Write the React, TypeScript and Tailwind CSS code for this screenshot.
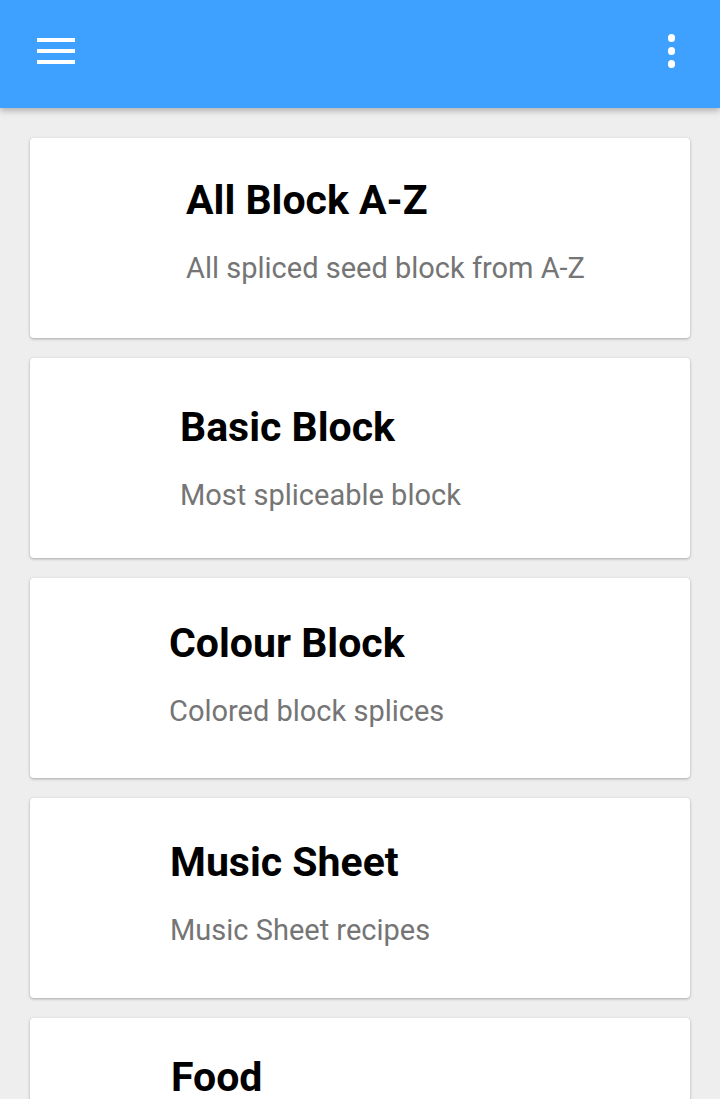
const cards = [
  { title: 'All Block A-Z', sub: 'All spliced seed block from A-Z', pad: 'pl-[156px] pt-[38px]' },
  { title: 'Basic Block', sub: 'Most spliceable block', pad: 'pl-[150px] pt-[45px]' },
  { title: 'Colour Block', sub: 'Colored block splices', pad: 'pl-[139px] pt-[41px]' },
  { title: 'Music Sheet', sub: 'Music Sheet recipes', pad: 'pl-[140px] pt-[40px]' },
  { title: 'Food', sub: 'Food recipes', pad: 'pl-[141px] pt-[35px]' },
];

export default function App() {
  return (
    <div
      className="h-[1099px] overflow-hidden bg-[#eeeeee]"
      style={{ fontFamily: 'Roboto, "Liberation Sans", sans-serif' }}
    >
      <header className="relative z-10 flex h-[108px] items-center justify-between bg-[#3ea1ff] pl-[37px] pr-[45px] shadow-[0_3px_6px_rgba(0,0,0,0.25)]">
        <div className="flex w-[38px] flex-col gap-[7px] -mt-[6px]">
          <span className="h-[4px] bg-white" />
          <span className="h-[4px] bg-white" />
          <span className="h-[4px] bg-white" />
        </div>
        <div className="-mt-[6px] flex flex-col items-center gap-[5px]">
          <span className="h-[8px] w-[7px] rounded-full bg-white" />
          <span className="h-[8px] w-[7px] rounded-full bg-white" />
          <span className="h-[8px] w-[7px] rounded-full bg-white" />
        </div>
      </header>
      <main className="flex flex-col gap-[20px] px-[30px] pt-[30px]">
        {cards.map((c) => (
          <div
            key={c.title}
            className={`h-[200px] shrink-0 rounded-[4px] bg-white shadow-[0_1px_3px_rgba(0,0,0,0.3)] ${c.pad}`}
          >
            <div className="text-[41px] font-bold leading-[48px] text-black">{c.title}</div>
            <div className="mt-[28px] text-[29px] leading-[32px] text-[#757575]">{c.sub}</div>
          </div>
        ))}
      </main>
    </div>
  );
}
